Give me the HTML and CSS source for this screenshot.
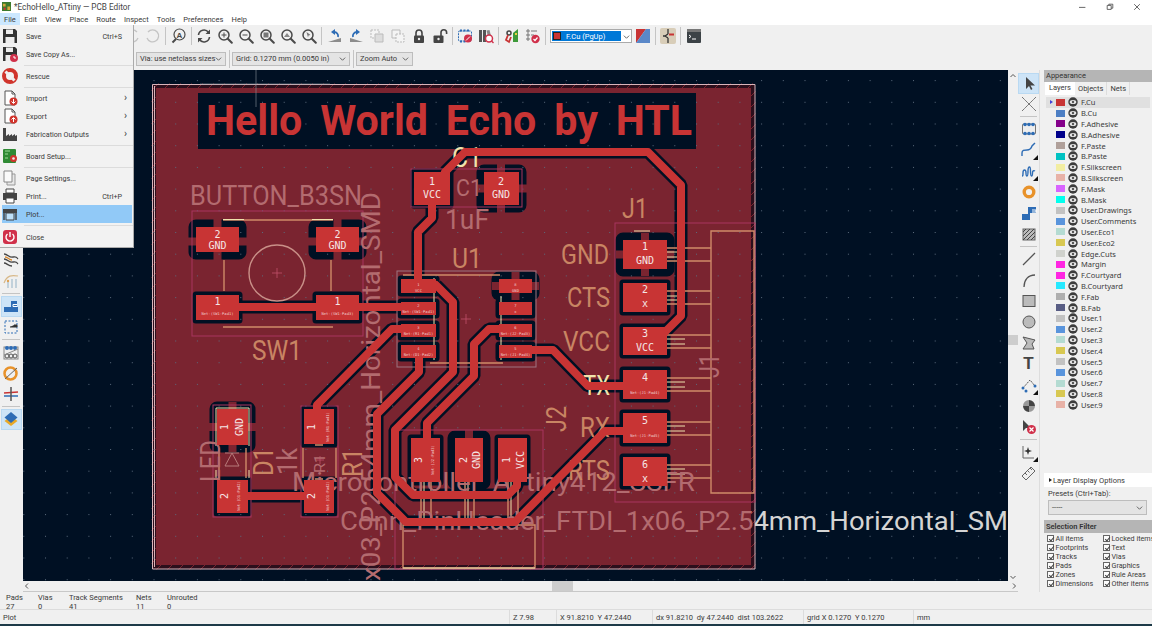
FILE: index.html
```html
<!DOCTYPE html>
<html lang="en">
<head>
  <meta charset="UTF-8" />
  <title>*EchoHello_ATtiny — PCB Editor</title>
  <link rel="stylesheet" href="styles.css">
</head>
<body>

  <svg class="sprites" aria-hidden="true">
    <symbol id="eye" viewBox="0 0 10 10">
      <circle cx="5" cy="5" r="4.7" fill="#3c3c3c"/>
      <ellipse cx="5" cy="5" rx="3.3" ry="2.1" fill="#e8e8e8"/>
      <circle cx="5" cy="5" r="1.2" fill="#555"/>
    </symbol>
    <symbol id="lens" viewBox="0 0 16 16">
      <circle cx="7" cy="7" r="5" fill="none" stroke="#4a4a4a" stroke-width="1.5"/>
      <path d="M10.8 10.8l4 4" stroke="#4a4a4a" stroke-width="2" stroke-linecap="round"/>
    </symbol>
    <symbol id="doc" viewBox="0 0 16 16">
      <path d="M3 1h7l3 3v11H3z" fill="#fff" stroke="#555"/>
      <path d="M10 1v3h3" fill="none" stroke="#555"/>
    </symbol>
    <symbol id="floppy" viewBox="0 0 16 16">
      <path d="M1 1h12l2 2v12H1z" fill="#333"/>
      <rect x="4" y="1.5" width="7" height="4.5" fill="#eee"/>
      <rect x="3.5" y="9" width="9" height="6" fill="#eee"/>
    </symbol>
  </svg>

  <header class="titlebar">
    <svg class="app-ico" viewBox="0 0 10 10"><rect width="10" height="10" fill="#3d7a2c"/><path d="M1 2h3v3H1zM6 5h3v4H6z" fill="#d8a83a"/><circle cx="3" cy="7.500" r="1.300" fill="#c83434"/></svg>
    <span class="title">*EchoHello_ATtiny — PCB Editor</span>
    <div class="win-btns">
      <svg viewBox="0 0 10 10"><path d="M0 5.500h8" stroke="#444" stroke-width="1"/></svg>
      <svg viewBox="0 0 10 10"><path d="M1.500 3h5v5h-5zM3.500 3V1.500h5v5H6.500" fill="none" stroke="#444"/></svg>
      <svg viewBox="0 0 10 10"><path d="M1.500 1.500l7 7M8.500 1.500l-7 7" stroke="#444"/></svg>
    </div>
  </header>

  <nav class="menubar">
    <span class="menu-title open">File</span>
    <span class="menu-title">Edit</span>
    <span class="menu-title">View</span>
    <span class="menu-title">Place</span>
    <span class="menu-title">Route</span>
    <span class="menu-title">Inspect</span>
    <span class="menu-title">Tools</span>
    <span class="menu-title">Preferences</span>
    <span class="menu-title">Help</span>
  </nav>

  <div class="toolbar toolbar-top">
    <span class="tool"><svg class="ico" viewBox="0 0 16 16"><path d="M13 4a6 6 0 1 0 1 6" fill="none" stroke="#c4c4c4" stroke-width="1.300"/></svg></span>
    <span class="tool"><svg class="ico" viewBox="0 0 16 16"><path d="M3 4a6 6 0 1 1-1 6" fill="none" stroke="#c4c4c4" stroke-width="1.300"/></svg></span>
    <span class="sep"></span>
    <span class="tool"><svg class="ico" viewBox="0 0 16 16"><circle cx="8.500" cy="6.500" r="5.500" fill="none" stroke="#4a4a4a" stroke-width="1.200"/><path d="M5 11l-3.500 3.500" stroke="#4a4a4a" stroke-width="2"/><text x="8.500" y="9.500" class="ico-text">A</text></svg></span>
    <span class="sep"></span>
    <span class="tool"><svg class="ico" viewBox="0 0 16 16"><path d="M2.500 7a5.500 5.500 0 0 1 10-2.500M13.500 9a5.500 5.500 0 0 1-10 2.500" fill="none" stroke="#4a4a4a" stroke-width="1.600"/><path d="M14 1.500v4.500h-4.500zM2 14.500V10h4.500z" fill="#4a4a4a"/></svg></span>
    <span class="tool"><svg class="ico" viewBox="0 0 16 16"><use href="#lens"/><path d="M4.500 7h5M7 4.500v5" stroke="#4a4a4a"/></svg></span>
    <span class="tool"><svg class="ico" viewBox="0 0 16 16"><use href="#lens"/><path d="M4.500 7h5" stroke="#4a4a4a"/></svg></span>
    <span class="tool"><svg class="ico" viewBox="0 0 16 16"><use href="#lens"/><rect x="4.500" y="4.500" width="5" height="5" fill="#777"/></svg></span>
    <span class="tool"><svg class="ico" viewBox="0 0 16 16"><use href="#lens"/><path d="M4 9l3-4 3 4z" fill="#888"/></svg></span>
    <span class="tool"><svg class="ico" viewBox="0 0 16 16"><use href="#lens"/><path d="M5.500 4l4 3-2 .5-.5 2z" fill="#777"/></svg></span>
    <span class="sep"></span>
    <span class="tool"><svg class="ico" viewBox="0 0 16 16"><path d="M1 14l13-4v4z" fill="#8c8c8c"/><path d="M11 9a4 4 0 0 0-4-5" fill="none" stroke="#2d6cb5" stroke-width="1.800"/><path d="M8 1L4 4l4 3z" fill="#2d6cb5"/></svg></span>
    <span class="tool"><svg class="ico" viewBox="0 0 16 16"><path d="M15 14L2 10v4z" fill="#8c8c8c"/><path d="M5 9a4 4 0 0 1 4-5" fill="none" stroke="#2d6cb5" stroke-width="1.800"/><path d="M8 1l4 3-4 3z" fill="#2d6cb5"/></svg></span>
    <span class="tool"><svg class="ico" viewBox="0 0 16 16"><path d="M2 2h8v8H2z" fill="#f4f4f4" stroke="#bbb" stroke-dasharray="2 1"/><path d="M6 6h8v8H6z" fill="#ddd" stroke="#bbb"/></svg></span>
    <span class="tool"><svg class="ico" viewBox="0 0 16 16"><path d="M2 2h8v8H2z" fill="#f4f4f4" stroke="#bbb"/><path d="M6 6h8v8H6z" fill="#f4f4f4" stroke="#bbb" stroke-dasharray="2 1"/></svg></span>
    <span class="tool"><svg class="ico" viewBox="0 0 16 16"><path d="M5 8V5a3 3 0 0 1 6 0v3" fill="none" stroke="#444" stroke-width="1.600"/><rect x="3" y="7.500" width="10" height="7.500" rx="1" fill="#444"/><circle cx="8" cy="11" r="1.200" fill="#eee"/></svg></span>
    <span class="tool"><svg class="ico" viewBox="0 0 16 16"><path d="M9 8V4.500a2.800 2.800 0 0 1 5.600 0V6" fill="none" stroke="#444" stroke-width="1.600"/><rect x="1.500" y="7.500" width="10" height="7.500" rx="1" fill="#444"/><circle cx="6.500" cy="11" r="1.200" fill="#eee"/></svg></span>
    <span class="sep"></span>
    <span class="tool"><svg class="ico" viewBox="0 0 16 16"><rect x="1.500" y="3" width="13" height="10" rx="1" fill="none" stroke="#2d6cb5" stroke-dasharray="2 1"/><path d="M3 2.500h10M3 13.500h6" stroke="#2d6cb5" stroke-width="2" stroke-dasharray="2 1.500"/><circle cx="11" cy="10.500" r="4" fill="#d0304a"/><path d="M9 12.500l4-4" stroke="#fff"/></svg></span>
    <span class="tool"><svg class="ico" viewBox="0 0 16 16"><path d="M1 2h3v12H1zM5 2h3v12H5z" fill="#555"/><path d="M8.500 2.500l3-.5 2 8-3 .5z" fill="#888"/><circle cx="11" cy="10.500" r="3.500" fill="#fff" stroke="#d0304a" stroke-width="1.500"/><path d="M13.500 13l2 2" stroke="#d0304a" stroke-width="1.500"/></svg></span>
    <span class="sep"></span>
    <span class="tool"><svg class="ico" viewBox="0 0 16 16"><path d="M9 5l5-4v13H9z" fill="#3e9a3a"/><circle cx="5" cy="5" r="2" fill="none" stroke="#444" stroke-width="1.500"/><path d="M4 7l-2 5 3 2 2-5" fill="none" stroke="#c83434" stroke-width="1.800"/><rect x="11" y="5" width="2" height="2" fill="#e8d040"/></svg></span>
    <span class="tool"><svg class="ico" viewBox="0 0 16 16"><path d="M2 2h2v2H2zM2 6h2v2H2zM2 10h2v2H2z" fill="none" stroke="#777"/><path d="M6 3h6M6 7h3" stroke="#777"/><circle cx="10.500" cy="11" r="4.200" fill="#d0304a"/><path d="M8.500 11l1.500 1.500 2.500-3" fill="none" stroke="#fff" stroke-width="1.200"/></svg></span>
    <span class="sep"></span>
    <span class="layer-select">
      <span class="layer-select-value"><i class="layer-select-swatch"></i>F.Cu (PgUp)</span>
      <svg class="chevron" viewBox="0 0 8 8"><path d="M1 3l3 3 3-3" fill="none" stroke="#555"/></svg>
    </span>
    <span class="tool"><svg class="ico" viewBox="0 0 16 16"><path d="M1 1h10L1 15z" fill="#c83434"/><path d="M15 1H11L1 15h14z" fill="#5a88c8"/></svg></span>
    <span class="sep"></span>
    <span class="tool"><svg class="ico" viewBox="0 0 16 16"><rect width="16" height="16" rx="2" fill="#d8cdb8"/><path d="M8 1v5M8 10v5M3 8h3M8 6l-3 2 3 2" fill="none" stroke="#333" stroke-width="1.300"/><rect x="9" y="5.500" width="5" height="2" fill="#c83434"/></svg></span>
    <span class="sep"></span>
    <span class="tool"><svg class="ico" viewBox="0 0 16 16"><rect x="1" y="1" width="14" height="14" rx="1" fill="#3c4246"/><rect x="1" y="1" width="14" height="3" fill="#777"/><path d="M3 7l2 1.500L3 10M6 11h4" fill="none" stroke="#fff"/></svg></span>
  </div>

  <div class="toolbar toolbar-sec">
    <span class="drop drop-via">Via: use netclass sizes<svg class="chevron" viewBox="0 0 8 8"><path d="M1 3l3 3 3-3" fill="none" stroke="#555"/></svg></span>
    <span class="sep"></span>
    <span class="drop drop-grid">Grid: 0.1270 mm (0.0050 in)<svg class="chevron" viewBox="0 0 8 8"><path d="M1 3l3 3 3-3" fill="none" stroke="#555"/></svg></span>
    <span class="sep"></span>
    <span class="drop drop-zoom">Zoom Auto<svg class="chevron" viewBox="0 0 8 8"><path d="M1 3l3 3 3-3" fill="none" stroke="#555"/></svg></span>
  </div>

  <main class="workspace">
    <aside class="side-tools side-left">
      <span class="tool"><svg class="ico" viewBox="0 0 16 16"><path d="M1 2c4 0 5 4 9 3s4 1 5 2M1 7c4 0 5 4 9 3s4 1 5 2M1 11c3 0 4 3 8 3" fill="none" stroke="#444" stroke-width="1.300"/><path d="M2 5c3 0 4 3 7 3" fill="none" stroke="#d8862a" stroke-width="1.300"/></svg></span>
      <span class="tool"><svg class="ico" viewBox="0 0 16 16"><path d="M1 10c3-8 8-8 14-7" fill="none" stroke="#d8b888" stroke-width="1.200"/><path d="M5 15V8M9 15V6M13 15V6" stroke="#aac0d0" stroke-width="1.300"/><circle cx="5" cy="8" r="1.200" fill="#e0a050"/></svg></span>
      <span class="sep-h"></span>
      <span class="tool active"><svg class="ico" viewBox="0 0 16 16"><path d="M1 9h7V3h6v6h1v5H1z" fill="#2d6cb5"/><path d="M10 6.500h4M10 6.500v2h4" fill="none" stroke="#fff"/></svg></span>
      <span class="tool"><svg class="ico" viewBox="0 0 16 16"><rect x="2" y="2" width="12" height="12" fill="none" stroke="#2d6cb5" stroke-dasharray="2 1.500"/><path d="M7 8h7V6h-3" fill="#333" stroke="#333"/></svg></span>
      <span class="sep-h"></span>
      <span class="tool"><svg class="ico" viewBox="0 0 16 16"><rect x="1" y="3" width="14" height="12" fill="none" stroke="#888"/><circle cx="4" cy="4" r="2" fill="#2d6cb5"/><circle cx="8" cy="4" r="2" fill="#2d6cb5"/><circle cx="12" cy="4" r="2" fill="#2d6cb5"/><circle cx="4" cy="12" r="2" fill="none" stroke="#555"/><circle cx="8" cy="12" r="2" fill="none" stroke="#555"/><circle cx="12" cy="12" r="2" fill="none" stroke="#555"/><path d="M1 11L15 5" stroke="#888"/></svg></span>
      <span class="tool"><svg class="ico" viewBox="0 0 16 16"><circle cx="7.500" cy="8.500" r="6" fill="none" stroke="#e8922a" stroke-width="2.500"/><path d="M2 14L14 3" stroke="#666"/></svg></span>
      <span class="tool"><svg class="ico" viewBox="0 0 16 16"><path d="M1 10h14" stroke="#2d6cb5" stroke-width="1.500"/><path d="M1 7l14-1" stroke="#c83434" stroke-width="1.500"/><path d="M8 1v14" stroke="#555" stroke-width="1.500"/></svg></span>
      <span class="sep-h"></span>
      <span class="tool active"><svg class="ico" viewBox="0 0 16 16"><path d="M8 5l6.500 5L8 15l-6.500-5z" fill="#e8a828"/><path d="M8 1l6.500 5.500L8 12 1.500 6.500z" fill="#2d6cb5"/></svg></span>
    </aside>

    <div class="canvas-col">
      <div class="canvas-row">
        <svg class="board" viewBox="23 70 985 511">
          <defs>
            <pattern id="grid" x="23.300" y="15" width="21.700" height="21.700" patternUnits="userSpaceOnUse">
              <rect x="0" y="0" width="1" height="1" fill="#5a6a7c"/>
            </pattern>
            <pattern id="hatch" width="11" height="11" patternUnits="userSpaceOnUse">
              <path d="M-1 12L12-1" stroke="#7a2430" stroke-width="1"/>
            </pattern>
            <clipPath id="on-board"><rect x="152" y="70" width="603" height="511"/></clipPath>
            <clipPath id="off-board"><rect x="755" y="70" width="253" height="511"/></clipPath>

            <path id="tracks" d="M445 172L465 152H648L681 185V316L660 337
              M432 205V218L418 232V280
              M239 307H402
              M317 409V405L392 329H402
              M419 358V372L377 414V493L406 522H515L605 431H625
              M436 285L453 302V372L395 430V477L413 495H508L517 486V470
              M499 329H489L474 344V376L427 423V440
              M532 350H553L588 386H625
              M231 496H318"/>
            <g id="pads">
              <rect x="196" y="295" width="43" height="25"/>
              <rect x="316" y="295" width="43" height="25"/>
              <rect x="217" y="480" width="31" height="33"/>
              <rect x="304" y="409" width="30" height="35"/>
              <rect x="304" y="480" width="30" height="33"/>
              <rect x="414" y="172" width="36" height="33"/>
              <rect x="401" y="279" width="35" height="14"/>
              <rect x="401" y="302" width="35" height="13"/>
              <rect x="401" y="324" width="35" height="13"/>
              <rect x="401" y="345" width="35" height="13"/>
              <rect x="499" y="302" width="33" height="13"/>
              <rect x="499" y="324" width="33" height="13"/>
              <rect x="499" y="345" width="33" height="13"/>
              <rect x="623" y="283" width="44" height="29"/>
              <rect x="623" y="327" width="44" height="28"/>
              <rect x="623" y="370" width="44" height="29"/>
              <rect x="623" y="413" width="44" height="30"/>
              <rect x="623" y="457" width="44" height="29"/>
              <rect x="411" y="438" width="29" height="44"/>
              <rect x="498" y="438" width="29" height="44"/>
            </g>
            <g id="gnd-pads">
              <rect x="196" y="227" width="43" height="25"/>
              <rect x="316" y="227" width="43" height="25"/>
              <rect x="217" y="409" width="31" height="36"/>
              <rect x="484" y="172" width="35" height="33"/>
              <rect x="499" y="279" width="33" height="14"/>
              <rect x="623" y="240" width="44" height="29"/>
              <rect x="455" y="438" width="28" height="44"/>
            </g>
          </defs>

          <rect class="bg" x="23" y="70" width="985" height="511"/>

          <!-- zone -->
          <rect class="edge-gap" x="152" y="84" width="603" height="485"/>
          <rect class="zone" x="156" y="88" width="595" height="477"/>
          <rect class="hatch-strip" x="154" y="86" width="599" height="481"/>
          <path class="edge" d="M152.500 84.500H755V569H152.500ZM154.500 86V567"/>
          <rect class="bg" x="198" y="93" width="498" height="56"/>

          <!-- clearance -->
          <use class="trk-clear" href="#tracks"/>
          <use class="pad-clear" href="#pads"/>
          <use class="gnd-clear" href="#gnd-pads"/>
          <path class="spoke" d="M217.500 216v44M337.500 216v44M186 241.500h64M306 241.500h64M232.500 402v50M207 427h50
            M501 164v50M478 188.500h50M515.500 272v28M492 286h47M645 233v43M616 254.500h58M469 428v12"/>

          <rect class="grid" x="23" y="70" width="985" height="511"/>

          <!-- fab and silk -->
          <g class="courtyards">
            <rect x="192" y="211" width="171" height="125"/>
            <rect x="411" y="169" width="111" height="38"/>
            <rect x="213" y="405" width="38" height="112"/>
            <rect x="301" y="406" width="37" height="111"/>
            <rect x="615" y="223" width="140" height="279"/>
            <rect x="395" y="430" width="148" height="139"/>
          </g>
          <rect class="outline-u1" x="397" y="271" width="139" height="96"/>

          <g class="silk">
            <path d="M223 220H333M223 327H333M224 260V291M331 260V291"/>
            <circle cx="277" cy="273" r="28"/>
            <path d="M403 275H500M430 363H503"/>
            <path d="M711 493V231H754V493ZM754 231V493"/>
            <path d="M403 568V525H535V568Z"/>
            <path d="M667 248H711M667 261H711M667 291H711M667 304H711M667 335H711M667 348H711M667 378H711M667 391H711M667 422H711M667 435H711M667 465H711M667 478H711"/>
            <path d="M421 482V525M431 482V525M465 482V525M474 482V525M508 482V525M518 482V525"/>
            <path d="M219 448V478M246 448V478M303 448V478M336 448V478M315 445H323M315 479H323"/>
          </g>
          <g class="silk-y">
            <path d="M223 219.500H244M312 219.500H333M216 446V408H249V446M216 478V470M249 478V470"/>
            <path d="M667 252H685M667 257H685M667 296H685M667 300H685M667 339H685M667 344H685M667 382H685M667 387H685M667 426H685M667 431H685M667 469H685M667 474H685"/>
            <path d="M403 568H535M634 231H650M424 482V525M468 482V525M511 482V525"/>
            <path d="M434 278V360M501 296V360"/>
          </g>
          <path class="silk-thin" d="M232 453l-7 13h14zM225 453h14"/>
          <path class="cross" d="M272 273h10M277 268v10M461 319h10M466 314v10M316 460h8M320 456v8"/>

          <g class="txt dim">
            <text x="190" y="205" font-size="27" textLength="172" lengthAdjust="spacingAndGlyphs">BUTTON_B3SN</text>
            <text x="445" y="229" font-size="27" textLength="44" lengthAdjust="spacingAndGlyphs">1uF</text>
            <text x="456" y="196" font-size="24" textLength="26" lengthAdjust="spacingAndGlyphs">C1</text>
            <text x="220" y="482" font-size="27" textLength="42" lengthAdjust="spacingAndGlyphs" transform="rotate(-90 220 482)">LED</text>
            <text x="325" y="473" font-size="14" textLength="19" lengthAdjust="spacingAndGlyphs" transform="rotate(-90 325 473)">R1</text>
            <text x="297" y="475" font-size="27" textLength="27" lengthAdjust="spacingAndGlyphs" transform="rotate(-90 297 475)">1k</text>
            <text x="380" y="581" font-size="25" textLength="389" lengthAdjust="spacingAndGlyphs" transform="rotate(-90 380 581)">x03_P2.54mm_Horizontal_SMD</text>
            <text x="292" y="491" font-size="25" textLength="403" lengthAdjust="spacingAndGlyphs">Microcontroller_ATtiny412_SSFR</text>
            <text x="340" y="530" font-size="25" textLength="668" lengthAdjust="spacingAndGlyphs" clip-path="url(#on-board)">Conn_PinHeader_FTDI_1x06_P2.54mm_Horizontal_SM</text>
            <text x="719" y="378" font-size="27" textLength="24" lengthAdjust="spacingAndGlyphs" transform="rotate(-90 719 378)">J1</text>
          </g>
          <text class="txt off" x="340" y="530" font-size="25" textLength="668" lengthAdjust="spacingAndGlyphs" clip-path="url(#off-board)">Conn_PinHeader_FTDI_1x06_P2.54mm_Horizontal_SM</text>
          <g class="txt warm">
            <text x="252" y="360" font-size="27" textLength="50" lengthAdjust="spacingAndGlyphs">SW1</text>
            <text x="452" y="268" font-size="27" textLength="30" lengthAdjust="spacingAndGlyphs">U1</text>
            <text x="622" y="218" font-size="27" textLength="26" lengthAdjust="spacingAndGlyphs">J1</text>
            <text x="561" y="264" font-size="27" textLength="48" lengthAdjust="spacingAndGlyphs">GND</text>
            <text x="567" y="307" font-size="27" textLength="43" lengthAdjust="spacingAndGlyphs">CTS</text>
            <text x="563" y="351" font-size="27" textLength="47" lengthAdjust="spacingAndGlyphs">VCC</text>
            <text x="580" y="437" font-size="27" textLength="30" lengthAdjust="spacingAndGlyphs">RX</text>
            <text x="568" y="480" font-size="27" textLength="42" lengthAdjust="spacingAndGlyphs">RTS</text>
            <text x="273" y="476" font-size="27" textLength="29" lengthAdjust="spacingAndGlyphs" transform="rotate(-90 273 476)">D1</text>
            <text x="362" y="477" font-size="27" textLength="29" lengthAdjust="spacingAndGlyphs" transform="rotate(-90 362 477)">R1</text>
            <text x="566" y="432" font-size="27" textLength="26" lengthAdjust="spacingAndGlyphs" transform="rotate(-90 566 432)">J2</text>
          </g>
          <g class="txt pale">
            <text x="452" y="167" font-size="27" textLength="30" lengthAdjust="spacingAndGlyphs">C1</text>
            <text x="583" y="395" font-size="27" textLength="27" lengthAdjust="spacingAndGlyphs">TX</text>
          </g>

          <!-- copper -->
          <use class="trk" href="#tracks"/>
          <use class="pad" href="#pads"/>
          <use class="pad" href="#gnd-pads"/>
          <text class="hello" x="206" y="135" textLength="486" lengthAdjust="spacingAndGlyphs">Hello World Echo by HTL</text>

          <g class="pl">
            <text x="217.500" y="238">2</text><text x="217.500" y="249">GND</text>
            <text x="337.500" y="238">2</text><text x="337.500" y="249">GND</text>
            <text x="217.500" y="305">1</text>
            <text x="337.500" y="305">1</text>
            <text x="432" y="185">1</text><text x="432" y="198">VCC</text>
            <text x="501" y="185">2</text><text x="501" y="198">GND</text>
            <text x="645" y="250">1</text><text x="645" y="264">GND</text>
            <text x="645" y="293">2</text><text x="645" y="307">x</text>
            <text x="645" y="337">3</text><text x="645" y="351">VCC</text>
            <text x="645" y="381">4</text>
            <text x="645" y="424">5</text>
            <text x="645" y="468">6</text><text x="645" y="482">x</text>
            <text x="228" y="427" transform="rotate(-90 228 427)">1</text>
            <text x="243" y="427" transform="rotate(-90 243 427)">GND</text>
            <text x="228" y="496" transform="rotate(-90 228 496)">2</text>
            <text x="315" y="427" transform="rotate(-90 315 427)">1</text>
            <text x="315" y="496" transform="rotate(-90 315 496)">2</text>
            <text x="422" y="460" transform="rotate(-90 422 460)">3</text>
            <text x="467" y="460" transform="rotate(-90 467 460)">2</text>
            <text x="480" y="460" transform="rotate(-90 480 460)">GND</text>
            <text x="510" y="460" transform="rotate(-90 510 460)">1</text>
            <text x="524" y="460" transform="rotate(-90 524 460)">VCC</text>
          </g>
          <g class="pn">
            <text x="217.500" y="315">Net-(SW1-Pad1)</text>
            <text x="337.500" y="315">Net-(SW1-Pad3)</text>
            <text x="645" y="394">Net-(J1-Pad4)</text>
            <text x="645" y="437">Net-(J1-Pad5)</text>
            <text x="418.500" y="291.500">VCC</text>
            <text x="418.500" y="313">Net-(SW1-Pad1)</text>
            <text x="418.500" y="335">Net-(R1-Pad1)</text>
            <text x="418.500" y="356">Net-(D1-Pad2)</text>
            <text x="515.500" y="291.500">GND</text>
            <text x="515.500" y="313">x</text>
            <text x="515.500" y="335">Net-(J2-Pad3)</text>
            <text x="515.500" y="356">Net-(J1-Pad4)</text>
            <text x="240" y="496" transform="rotate(-90 240 496)">Net-(D1-Pad2)</text>
            <text x="329" y="427" transform="rotate(-90 329 427)">Net-(R1-Pad1)</text>
            <text x="329" y="496" transform="rotate(-90 329 496)">Net-(D1-Pad2)</text>
            <text x="434" y="460" transform="rotate(-90 434 460)">Net-(J2-Pad3)</text>
          </g>
          <g class="pn">
            <text x="418.500" y="286">1</text>
            <text x="418.500" y="307">2</text>
            <text x="418.500" y="329">3</text>
            <text x="418.500" y="350">4</text>
            <text x="515.500" y="286">8</text>
            <text x="515.500" y="307">7</text>
            <text x="515.500" y="329">6</text>
            <text x="515.500" y="350">5</text>
          </g>
          <path class="cursor" d="M256 70V107M200 84H330"/>
        </svg>
        <div class="vscroll">
          <svg viewBox="0 0 8 8"><path d="M1.500 5l2.500-2.500L6.500 5" fill="none" stroke="#555"/></svg>
          <span class="vthumb"></span>
          <svg viewBox="0 0 8 8"><path d="M1.500 3l2.500 2.500L6.500 3" fill="none" stroke="#555"/></svg>
        </div>
      </div>
      <div class="hscroll">
        <svg viewBox="0 0 8 8"><path d="M5 1.500L2.500 4 5 6.500" fill="none" stroke="#555"/></svg>
        <span class="hthumb"></span>
        <svg viewBox="0 0 8 8"><path d="M3 1.500L5.500 4 3 6.500" fill="none" stroke="#555"/></svg>
      </div>
    </div>

    <aside class="side-tools side-right">
      <span class="tool active"><svg class="ico" viewBox="0 0 16 16"><path d="M5 2v12l3-3 2 4 1.500-1-2-3.500H14z" fill="#444"/></svg></span>
      <span class="tool"><svg class="ico" viewBox="0 0 16 16"><path d="M1 1c4 4 4 4 7 7s3 3 7 7M15 1c-4 4-4 4-7 7s-3 3-7 7" fill="none" stroke="#777"/></svg></span>
      <span class="sep-h"></span>
      <span class="tool"><svg class="ico" viewBox="0 0 16 16"><rect x="1.500" y="3" width="13" height="10" rx="1" fill="#eee" stroke="#777"/><g fill="#2d6cb5"><circle cx="4" cy="3.500" r="1.800"/><circle cx="8" cy="3.500" r="1.800"/><circle cx="12" cy="3.500" r="1.800"/><circle cx="4" cy="12.500" r="1.800"/><circle cx="8" cy="12.500" r="1.800"/><circle cx="12" cy="12.500" r="1.800"/></g></svg></span>
      <span class="tool"><svg class="ico" viewBox="0 0 16 16"><path d="M1 14V11C1 8 3 8 6 8s4-1 5-4l3-3" fill="none" stroke="#2d6cb5" stroke-width="1.400"/></svg><i class="corner"></i></span>
      <span class="tool"><svg class="ico" viewBox="0 0 16 16"><path d="M1 13c1 0 1-1 1-3s1-3 1.500-3S5 8 5 10s.5 3 1 3 1-1 1-5 1-4 1.500-4 1 1 1 4 .5 5 1 5 1-1 1-3 1-3 2.500-2" fill="none" stroke="#2d6cb5" stroke-width="1.400"/></svg><i class="corner"></i></span>
      <span class="tool"><svg class="ico" viewBox="0 0 16 16"><circle cx="8" cy="8" r="4.800" fill="none" stroke="#e8922a" stroke-width="3.400"/></svg></span>
      <span class="tool"><svg class="ico" viewBox="0 0 16 16"><path d="M1 9h6V2h8v6H9v7H1z" fill="#2d6cb5"/><path d="M11 5h4v2h-4" fill="none" stroke="#fff"/></svg></span>
      <span class="tool"><svg class="ico" viewBox="0 0 16 16"><rect x="2" y="3" width="12" height="11" fill="#bbb" stroke="#666"/><path d="M2 6l3-3M2 10l7-7M2 14L13 3M6 14l8-8M10 14l4-4" stroke="#444"/></svg></span>
      <span class="sep-h"></span>
      <span class="tool"><svg class="ico" viewBox="0 0 16 16"><path d="M2 14L14 2" stroke="#555" stroke-width="1.300"/></svg></span>
      <span class="tool"><svg class="ico" viewBox="0 0 16 16"><path d="M3 15C3 8 7 3 14 3" fill="none" stroke="#555" stroke-width="1.300"/></svg></span>
      <span class="tool"><svg class="ico" viewBox="0 0 16 16"><rect x="2" y="2.500" width="12" height="11" fill="#bbb" stroke="#555"/></svg></span>
      <span class="tool"><svg class="ico" viewBox="0 0 16 16"><circle cx="8" cy="8" r="6" fill="#bbb" stroke="#555"/></svg></span>
      <span class="tool"><svg class="ico" viewBox="0 0 16 16"><path d="M2 2l12 3-3 4 2 5-11 0 4-6z" fill="#bbb" stroke="#555"/></svg></span>
      <span class="tool"><span class="tool-t">T</span></span>
      <span class="tool"><svg class="ico" viewBox="0 0 16 16"><path d="M2 11L9 3l5 6" fill="none" stroke="#555" stroke-dasharray="2 1"/><circle cx="2" cy="11" r="1.500" fill="#2d6cb5"/><circle cx="14" cy="9" r="1.500" fill="#2d6cb5"/><circle cx="5" cy="14" r="1.500" fill="#2d6cb5"/></svg><i class="corner"></i></span>
      <span class="tool"><svg class="ico" viewBox="0 0 16 16"><path d="M8 8V2A6 6 0 0 1 14 8zM8 8v6A6 6 0 0 1 2 8z" fill="#444"/><path d="M8 8V2A6 6 0 0 0 2 8zM8 8v6a6 6 0 0 0 6-6z" fill="#999"/></svg></span>
      <span class="tool"><svg class="ico" viewBox="0 0 16 16"><path d="M2 1v11l3-3h5z" fill="#444"/><circle cx="10.500" cy="10.500" r="4.500" fill="#d0304a"/><path d="M8.500 8.500l4 4M12.500 8.500l-4 4" stroke="#fff" stroke-width="1.200"/></svg></span>
      <span class="sep-h"></span>
      <span class="tool"><svg class="ico" viewBox="0 0 16 16"><path d="M2 2v12h11" fill="none" stroke="#666"/><path d="M7 3l1 3 3 1-3 1-1 3-1-3-3-1 3-1z" fill="#333"/></svg><i class="corner"></i></span>
      <span class="tool"><svg class="ico" viewBox="0 0 16 16"><path d="M1 11l9-9 4 4-9 9zM4 8l2 2M6.500 5.500l2 2M9 3l2 2" fill="none" stroke="#666"/></svg></span>
    </aside>

    <aside class="appearance">
      <div class="panel-head">Appearance</div>
      <div class="tabs">
        <span class="tab on">Layers</span>
        <span class="tab">Objects</span>
        <span class="tab">Nets</span>
      </div>
      <div class="layers">
        <div class="layer current"><i class="cur-arrow"></i><i class="sw c-fcu"></i><svg class="eye"><use href="#eye"/></svg>F.Cu</div>
        <div class="layer"><i class="sw c-bcu"></i><svg class="eye"><use href="#eye"/></svg>B.Cu</div>
        <div class="layer"><i class="sw c-fadh"></i><svg class="eye"><use href="#eye"/></svg>F.Adhesive</div>
        <div class="layer"><i class="sw c-badh"></i><svg class="eye"><use href="#eye"/></svg>B.Adhesive</div>
        <div class="layer"><i class="sw c-fpaste"></i><svg class="eye"><use href="#eye"/></svg>F.Paste</div>
        <div class="layer"><i class="sw c-bpaste"></i><svg class="eye"><use href="#eye"/></svg>B.Paste</div>
        <div class="layer"><i class="sw c-fsilk"></i><svg class="eye"><use href="#eye"/></svg>F.Silkscreen</div>
        <div class="layer"><i class="sw c-bsilk"></i><svg class="eye"><use href="#eye"/></svg>B.Silkscreen</div>
        <div class="layer"><i class="sw c-fmask"></i><svg class="eye"><use href="#eye"/></svg>F.Mask</div>
        <div class="layer"><i class="sw c-bmask"></i><svg class="eye"><use href="#eye"/></svg>B.Mask</div>
        <div class="layer"><i class="sw c-grey"></i><svg class="eye"><use href="#eye"/></svg>User.Drawings</div>
        <div class="layer"><i class="sw c-blue"></i><svg class="eye"><use href="#eye"/></svg>User.Comments</div>
        <div class="layer"><i class="sw c-mint"></i><svg class="eye"><use href="#eye"/></svg>User.Eco1</div>
        <div class="layer"><i class="sw c-gold"></i><svg class="eye"><use href="#eye"/></svg>User.Eco2</div>
        <div class="layer"><i class="sw c-edge"></i><svg class="eye"><use href="#eye"/></svg>Edge.Cuts</div>
        <div class="layer"><i class="sw c-pink"></i><svg class="eye"><use href="#eye"/></svg>Margin</div>
        <div class="layer"><i class="sw c-pink"></i><svg class="eye"><use href="#eye"/></svg>F.Courtyard</div>
        <div class="layer"><i class="sw c-bcrt"></i><svg class="eye"><use href="#eye"/></svg>B.Courtyard</div>
        <div class="layer"><i class="sw c-ffab"></i><svg class="eye"><use href="#eye"/></svg>F.Fab</div>
        <div class="layer"><i class="sw c-bfab"></i><svg class="eye"><use href="#eye"/></svg>B.Fab</div>
        <div class="layer"><i class="sw c-grey"></i><svg class="eye"><use href="#eye"/></svg>User.1</div>
        <div class="layer"><i class="sw c-blue"></i><svg class="eye"><use href="#eye"/></svg>User.2</div>
        <div class="layer"><i class="sw c-mint"></i><svg class="eye"><use href="#eye"/></svg>User.3</div>
        <div class="layer"><i class="sw c-gold"></i><svg class="eye"><use href="#eye"/></svg>User.4</div>
        <div class="layer"><i class="sw c-grey"></i><svg class="eye"><use href="#eye"/></svg>User.5</div>
        <div class="layer"><i class="sw c-blue"></i><svg class="eye"><use href="#eye"/></svg>User.6</div>
        <div class="layer"><i class="sw c-mint"></i><svg class="eye"><use href="#eye"/></svg>User.7</div>
        <div class="layer"><i class="sw c-gold"></i><svg class="eye"><use href="#eye"/></svg>User.8</div>
        <div class="layer"><i class="sw c-bsilk"></i><svg class="eye"><use href="#eye"/></svg>User.9</div>
      </div>
      <div class="display-opts"><i class="tri"></i>Layer Display Options</div>
      <div class="presets">
        <div class="presets-label">Presets (Ctrl+Tab):</div>
        <div class="presets-select">-----<svg class="chevron" viewBox="0 0 8 8"><path d="M1 3l3 3 3-3" fill="none" stroke="#555"/></svg></div>
      </div>
      <div class="panel-head panel-head-b">Selection Filter</div>
      <div class="filters">
        <label class="filter"><i class="chk"></i>All items</label>
        <label class="filter"><i class="chk"></i>Locked items</label>
        <label class="filter"><i class="chk"></i>Footprints</label>
        <label class="filter"><i class="chk"></i>Text</label>
        <label class="filter"><i class="chk"></i>Tracks</label>
        <label class="filter"><i class="chk"></i>Vias</label>
        <label class="filter"><i class="chk"></i>Pads</label>
        <label class="filter"><i class="chk"></i>Graphics</label>
        <label class="filter"><i class="chk"></i>Zones</label>
        <label class="filter"><i class="chk"></i>Rule Areas</label>
        <label class="filter"><i class="chk"></i>Dimensions</label>
        <label class="filter"><i class="chk"></i>Other items</label>
      </div>
    </aside>
  </main>

  <section class="msg-panel">
    <div class="stat stat-pads"><span>Pads</span><span>27</span></div>
    <div class="stat stat-vias"><span>Vias</span><span>0</span></div>
    <div class="stat stat-tracks"><span>Track Segments</span><span>41</span></div>
    <div class="stat stat-nets"><span>Nets</span><span>11</span></div>
    <div class="stat"><span>Unrouted</span><span>0</span></div>
  </section>

  <footer class="statusbar">
    <span class="cell-msg">Plot</span>
    <span class="cell-z">Z 7.98</span>
    <span class="cell-xy">X 91.8210&nbsp; Y 47.2440</span>
    <span class="cell-dxy">dx 91.8210&nbsp; dy 47.2440&nbsp; dist 103.2622</span>
    <span class="cell-grid">grid X 0.1270&nbsp; Y 0.1270</span>
    <span class="cell-unit">mm</span>
  </footer>
  <div class="os-strip"></div>

  <!-- open File menu -->
  <div class="file-menu">
    <div class="mi"><svg class="ico" viewBox="0 0 16 16"><use href="#floppy"/></svg><span class="mi-label">Save</span><span class="mi-key">Ctrl+S</span></div>
    <div class="mi"><svg class="ico" viewBox="0 0 16 16"><use href="#floppy"/><circle cx="12" cy="12" r="4" fill="#d0304a"/><path d="M12 10v2h2" fill="none" stroke="#fff"/></svg><span class="mi-label">Save Copy As...</span></div>
    <div class="msep"></div>
    <div class="mi"><svg class="ico" viewBox="0 0 16 16"><circle cx="8" cy="8" r="6" fill="none" stroke="#d0342c" stroke-width="4"/><path d="M3.500 3.500l2.500 2.500M12.500 12.500L10 10" stroke="#eee" stroke-width="3"/></svg><span class="mi-label">Rescue</span></div>
    <div class="msep"></div>
    <div class="mi"><svg class="ico" viewBox="0 0 16 16"><use href="#doc"/><circle cx="11.500" cy="11.500" r="4" fill="#d0342c"/><path d="M11.500 9v4M9.500 11.500l2 2 2-2" fill="none" stroke="#fff"/></svg><span class="mi-label">Import</span><span class="mi-arrow">›</span></div>
    <div class="mi"><svg class="ico" viewBox="0 0 16 16"><use href="#doc"/><circle cx="11.500" cy="11.500" r="4" fill="#d0342c"/><path d="M11.500 14v-4M9.500 11.500l2-2 2 2" fill="none" stroke="#fff"/></svg><span class="mi-label">Export</span><span class="mi-arrow">›</span></div>
    <div class="mi"><svg class="ico" viewBox="0 0 16 16"><path d="M1 2h3v8l3-2v2l3-2v2l3-2v2l2-1v6H1z" fill="#444"/></svg><span class="mi-label">Fabrication Outputs</span><span class="mi-arrow">›</span></div>
    <div class="msep"></div>
    <div class="mi"><svg class="ico" viewBox="0 0 16 16"><rect x="1" y="1" width="13" height="14" rx="1" fill="#2f8a34"/><path d="M3 3h5M3 6h3M3 10h3" stroke="#9fdc9a"/><circle cx="11.500" cy="10.500" r="3.500" fill="#d0342c"/><circle cx="11.500" cy="10.500" r="1.300" fill="#eee"/></svg><span class="mi-label">Board Setup...</span></div>
    <div class="msep"></div>
    <div class="mi"><svg class="ico" viewBox="0 0 16 16"><path d="M5 4h8v11H5z" fill="#e8e8e8" stroke="#999"/><path d="M2 1h8v11H2z" fill="#fafafa" stroke="#888"/></svg><span class="mi-label">Page Settings...</span></div>
    <div class="mi"><svg class="ico" viewBox="0 0 16 16"><path d="M4 1h8v4H4z" fill="#fff" stroke="#444"/><path d="M1 5h14v7H1z" fill="#444"/><path d="M4 10h8v5H4z" fill="#fff" stroke="#444"/></svg><span class="mi-label">Print...</span><span class="mi-key">Ctrl+P</span></div>
    <div class="mi hot"><svg class="ico" viewBox="0 0 16 16"><path d="M1 3h14v4H1z" fill="#444"/><path d="M4 7h8v7H4z" fill="#bfe0f8" stroke="#444"/><path d="M2 7v7M14 7v7" stroke="#444" stroke-width="1.500"/></svg><span class="mi-label">Plot...</span></div>
    <div class="msep msep-b"></div>
    <div class="mi"><svg class="ico" viewBox="0 0 16 16"><rect x="1" y="1" width="14" height="14" rx="3" fill="#d0304a"/><path d="M5.500 5a4 4 0 1 0 5 0" fill="none" stroke="#fff" stroke-width="1.400"/><path d="M8 3v5" stroke="#fff" stroke-width="1.400"/></svg><span class="mi-label">Close</span></div>
  </div>

</body>
</html>
```
FILE: styles.css
```css
* {
  box-sizing: border-box;
}

body {
  margin: 0;
  width: 1152px;
  height: 626px;
  position: relative;
  display: flex;
  flex-direction: column;
  overflow: hidden;
  background: #f0f0f0;
  color: #3a3a3a;
  font-family: Roboto, 'Noto Sans', sans-serif;
  font-size: 7.5px;
  white-space: nowrap;
}

i {
  font-style: normal;
}

svg {
  display: block;
}

.sprites {
  position: absolute;
  width: 0;
  height: 0;
}

/* title + menu */

.titlebar {
  height: 13px;
  flex: none;
  display: flex;
  align-items: center;
  background: #fff;
  padding-left: 2px;
}

.app-ico {
  width: 9px;
  height: 9px;
}

.title {
  margin-left: 3px;
  font-size: 8.200px;
  color: #444;
}

.win-btns {
  margin-left: auto;
  display: flex;
  gap: 19px;
  padding-right: 11px;
}

.win-btns svg {
  width: 8px;
  height: 8px;
}

.menubar {
  height: 12px;
  flex: none;
  display: flex;
  background: #fff;
}

.menu-title {
  display: flex;
  align-items: center;
  padding: 0 3.500px;
  margin-right: 1.200px;
}

.menu-title.open {
  background: #cce8ff;
  padding: 0 4px;
  margin-right: 1px;
}

/* toolbars */

.toolbar {
  flex: none;
  display: flex;
  align-items: center;
}

.toolbar-top {
  height: 22px;
  padding-left: 121.500px;
}

.toolbar-sec {
  height: 23px;
  padding-left: 136px;
}

.tool {
  width: 21px;
  height: 21px;
  flex: none;
  position: relative;
  display: flex;
  align-items: center;
  justify-content: center;
}

.tool.active {
  background: #cde4f7;
  box-shadow: inset 0 0 0 1px #b9d9f2;
}

.ico {
  width: 16px;
  height: 16px;
  flex: none;
}

.ico-text {
  font-family: 'Liberation Sans', sans-serif;
  font-size: 8px;
  font-weight: bold;
  fill: #4a4a4a;
  text-anchor: middle;
}

.sep {
  width: 4.500px;
  height: 18px;
  flex: none;
  display: flex;
  justify-content: center;
}

.sep::before {
  content: '';
  width: 1px;
  background: #c4c4c4;
}

.toolbar-sec .sep {
  width: 6px;
}

.sep-h {
  height: 4px;
  width: 100%;
  flex: none;
  display: flex;
  align-items: center;
  padding: 0 2px;
}

.sep-h::before {
  content: '';
  flex: 1;
  height: 1px;
  background: #c4c4c4;
}

.corner {
  position: absolute;
  right: 1px;
  bottom: 1px;
  width: 0;
  height: 0;
  border-left: 5px solid transparent;
  border-bottom: 5px solid #111;
}

.chevron {
  width: 7px;
  height: 7px;
  flex: none;
}

.layer-select {
  width: 82px;
  height: 14px;
  margin-left: 2.500px;
  flex: none;
  display: flex;
  align-items: center;
  gap: 2px;
  padding: 1px;
  background: #fff;
  border: 1px solid #aaa;
}

.layer-select-value {
  flex: 1;
  height: 100%;
  display: flex;
  align-items: center;
  gap: 5px;
  padding-left: 1px;
  background: #0078d7;
  color: #fff;
}

.layer-select-swatch {
  width: 8px;
  height: 8px;
  background: #c83434;
  border: 1px solid #222;
}

.drop {
  height: 14px;
  flex: none;
  display: flex;
  align-items: center;
  justify-content: space-between;
  padding: 0 3px 0 3px;
  background: #e4e4e4;
  border: 1px solid #bdbdbd;
}

.drop-via {
  width: 90px;
}

.drop-grid {
  width: 118px;
}

.drop-zoom {
  width: 57px;
}

/* main area */

.workspace {
  height: 522px;
  flex: none;
  display: flex;
}

.side-tools {
  flex: none;
  display: flex;
  flex-direction: column;
  align-items: center;
}

.side-left {
  width: 23px;
  padding: 179.500px 1px 0 0;
}

.side-right {
  width: 22px;
  padding-top: 2.500px;
  border-right: 1px solid #ddd;
}

.tool-t {
  font-family: 'Liberation Sans', sans-serif;
  font-size: 17px;
  font-weight: bold;
  color: #444;
}

.canvas-col {
  width: 995px;
  flex: none;
  display: flex;
  flex-direction: column;
}

.canvas-row {
  height: 511px;
  display: flex;
}

.board {
  width: 985px;
  height: 511px;
  flex: none;
}

.bg {
  fill: #001023;
}

.edge-gap {
  fill: #2c0f1c;
}

.zone {
  fill: #7a2430;
}

.hatch-strip {
  fill: none;
  stroke: url(#hatch);
  stroke-width: 5;
}

.edge {
  fill: none;
  stroke: #d9b4ba;
  stroke-width: 1;
}

.grid {
  fill: url(#grid);
}

.trk-clear {
  fill: none;
  stroke: #001023;
  stroke-width: 13;
  stroke-linejoin: bevel;
}

.trk {
  fill: none;
  stroke: #c83434;
  stroke-width: 8;
  stroke-linejoin: round;
  stroke-linecap: round;
}

.pad-clear {
  fill: #001023;
  stroke: #001023;
  stroke-width: 7;
  stroke-linejoin: round;
}

.gnd-clear {
  fill: #001023;
  stroke: #001023;
  stroke-width: 15;
  stroke-linejoin: round;
}

.spoke {
  fill: none;
  stroke: #7a2430;
  stroke-width: 8;
}

.pad {
  fill: #c83434;
}

.courtyards rect {
  fill: none;
  stroke: #a8345f;
  stroke-width: 1;
}

.outline-u1 {
  fill: none;
  stroke: #9c7480;
  stroke-width: 1;
}

.silk {
  fill: none;
  stroke: #cf8a68;
  stroke-width: 1.400;
}

.silk circle {
  stroke: #c99088;
}

.silk-y {
  fill: none;
  stroke: #efe3ad;
  stroke-width: 1;
}

.silk-thin {
  fill: none;
  stroke: #b77a7a;
  stroke-width: 1;
}

.cross {
  fill: none;
  stroke: #c0506a;
  stroke-width: 0.800;
}

.cursor {
  fill: none;
  stroke: #8a95a0;
  stroke-width: 0.600;
}

.txt text,
text.txt {
  font-family: Roboto, 'DejaVu Sans', sans-serif;
  font-weight: 400;
}

.dim {
  fill: #b36b6f;
}

.off {
  fill: #d4d4d4;
}

.warm {
  fill: #c98563;
}

.pale {
  fill: #efe3ad;
}

.hello {
  font-family: Roboto, sans-serif;
  font-weight: 700;
  font-size: 43px;
  word-spacing: 8px;
  fill: #c83434;
}

.pl text {
  font-family: 'DejaVu Sans Mono', monospace;
  font-size: 10px;
  fill: #f4e6e6;
  text-anchor: middle;
}

.pn text {
  font-family: 'DejaVu Sans Mono', monospace;
  font-size: 3.800px;
  fill: #efcfcf;
  text-anchor: middle;
}

.vscroll {
  width: 10px;
  height: 511px;
  display: flex;
  flex-direction: column;
  align-items: center;
  padding-top: 2px;
  position: relative;
}

.vscroll svg {
  width: 8px;
  height: 8px;
}

.vthumb {
  display: block;
  width: 10px;
  height: 10px;
  margin: 255px 0 auto;
  background: #cdcdcd;
}

.hscroll {
  height: 11px;
  display: flex;
  align-items: center;
  border-bottom: 1px solid #c8c8c8;
}

.hscroll svg {
  width: 8px;
  height: 8px;
  flex: none;
}

.hthumb {
  width: 21px;
  height: 10px;
  margin-left: 521px;
  margin-right: auto;
  background: #cdcdcd;
}

/* appearance */

.appearance {
  width: 108px;
  margin-left: 4px;
  flex: none;
  display: flex;
  flex-direction: column;
}

.panel-head {
  height: 12px;
  flex: none;
  padding-left: 2px;
  line-height: 12px;
  background: #b5b5b5;
  color: #333;
}

.panel-head-b {
  height: 13px;
  line-height: 13px;
  font-weight: 600;
}

.tabs {
  height: 13px;
  flex: none;
  display: flex;
  padding-left: 1px;
}

.tab {
  padding: 0 3px;
  line-height: 14px;
  border-right: 1px solid #ddd;
}

.tab.on {
  background: #fff;
  line-height: 12px;
  padding: 0 4px;
  border-right: 0;
}

.layers {
  height: 378px;
  flex: none;
  padding: 2px 2px 0;
  font-family: 'Noto Sans', sans-serif;
}

.layer {
  height: 10.800px;
  display: flex;
  align-items: center;
  padding-left: 10px;
  position: relative;
}

.layer.current {
  background: #e0e0e0;
}

.cur-arrow {
  position: absolute;
  left: 4px;
  top: 3px;
  border-left: 3px solid #4040d8;
  border-top: 2.500px solid transparent;
  border-bottom: 2.500px solid transparent;
}

.sw {
  width: 9px;
  height: 7px;
  flex: none;
}

.eye {
  width: 10px;
  height: 10px;
  flex: none;
  margin: 0 3px 0 3px;
}

.c-fcu { background: #c83434; }
.c-bcu { background: #4d7fc4; }
.c-fadh { background: #84008a; }
.c-badh { background: #00008a; }
.c-fpaste { background: #b0a09a; }
.c-bpaste { background: #00c2c2; }
.c-fsilk { background: #f2eda1; }
.c-bsilk { background: #e8b2a7; }
.c-fmask { background: #d864ff; }
.c-bmask { background: #02ffee; }
.c-grey { background: #c2c2c2; }
.c-blue { background: #5994dc; }
.c-mint { background: #b4dbd2; }
.c-gold { background: #d8c852; }
.c-edge { background: #d0d2cd; }
.c-pink { background: #ff26e2; }
.c-bcrt { background: #26e9ff; }
.c-ffab { background: #afafaf; }
.c-bfab { background: #585d84; }

.display-opts {
  height: 14px;
  flex: none;
  display: flex;
  align-items: center;
  gap: 1px;
  padding-left: 5px;
  background: #fff;
}

.tri {
  border-left: 3px solid #222;
  border-top: 2.500px solid transparent;
  border-bottom: 2.500px solid transparent;
}

.presets {
  height: 33px;
  flex: none;
  padding: 2px 3px 0 4px;
}

.presets-label {
  line-height: 10px;
}

.presets-select {
  height: 15px;
  margin-top: 1px;
  width: 99px;
  display: flex;
  align-items: center;
  justify-content: space-between;
  padding: 0 3px;
  background: #e4e4e4;
  border: 1px solid #bdbdbd;
}

.filters {
  flex: 1;
  display: grid;
  grid-template-columns: 56px 1fr;
  grid-auto-rows: 9px;
  padding: 1px 0 0 3px;
  font-size: 7.200px;
}

.filter {
  display: flex;
  align-items: center;
  gap: 1.500px;
}

.chk {
  width: 7px;
  height: 7px;
  flex: none;
  position: relative;
  background: #fdfdfd;
  border: 1px solid #666;
}

.chk::after {
  content: '';
  position: absolute;
  left: 1.500px;
  top: -0.500px;
  width: 2px;
  height: 4px;
  border-right: 1px solid #444;
  border-bottom: 1px solid #444;
  transform: rotate(40deg);
}

/* bottom */

.msg-panel {
  height: 18px;
  flex: none;
  display: flex;
  padding: 1px 0 0 6px;
  gap: 17px;
  border-bottom: 1px solid #dcdcdc;
}

.stat {
  display: flex;
  flex-direction: column;
  line-height: 9px;
}

.stat-pads {
  width: 15px;
}

.stat-vias {
  width: 14px;
}

.stat-tracks {
  width: 50px;
}

.stat-nets {
  width: 14px;
}

.statusbar {
  height: 14px;
  flex: none;
  display: flex;
  align-items: center;
}

.statusbar span {
  height: 100%;
  display: flex;
  align-items: center;
  padding-left: 3px;
  border-right: 1px solid #dcdcdc;
  flex: none;
}

.cell-msg {
  width: 510px;
}

.cell-z {
  width: 47px;
}

.cell-xy {
  width: 96px;
}

.cell-dxy {
  width: 151px;
}

.cell-grid {
  width: 110px;
}

.cell-unit {
  border-right: 0 !important;
}

.os-strip {
  height: 2px;
  flex: none;
  background: #1d3a48;
}

/* file menu */

.file-menu {
  position: absolute;
  left: 0;
  top: 25px;
  width: 134px;
  height: 223px;
  padding-top: 2px;
  background: #f2f2f2;
  border-right: 1px solid #ababab;
  border-bottom: 1px solid #ababab;
  font-size: 7.200px;
}

.mi {
  height: 18px;
  display: flex;
  align-items: center;
  padding: 0 3px 0 2px;
  position: relative;
}

.mi .ico {
  margin-right: 8px;
}

.mi.hot {
  background: #91c9f7;
  margin: 0 1px 0 2px;
  padding-left: 0;
}

.mi-key {
  margin-left: auto;
  padding-right: 8px;
}

.mi-arrow {
  margin-left: auto;
  padding-right: 3px;
  font-size: 10px;
  line-height: 10px;
}

.msep {
  height: 4px;
  margin-left: 24px;
  display: flex;
  align-items: center;
}

.msep::before {
  content: '';
  flex: 1;
  height: 1px;
  background: #dcdcdc;
}

.msep-b {
  height: 5px;
}
```
